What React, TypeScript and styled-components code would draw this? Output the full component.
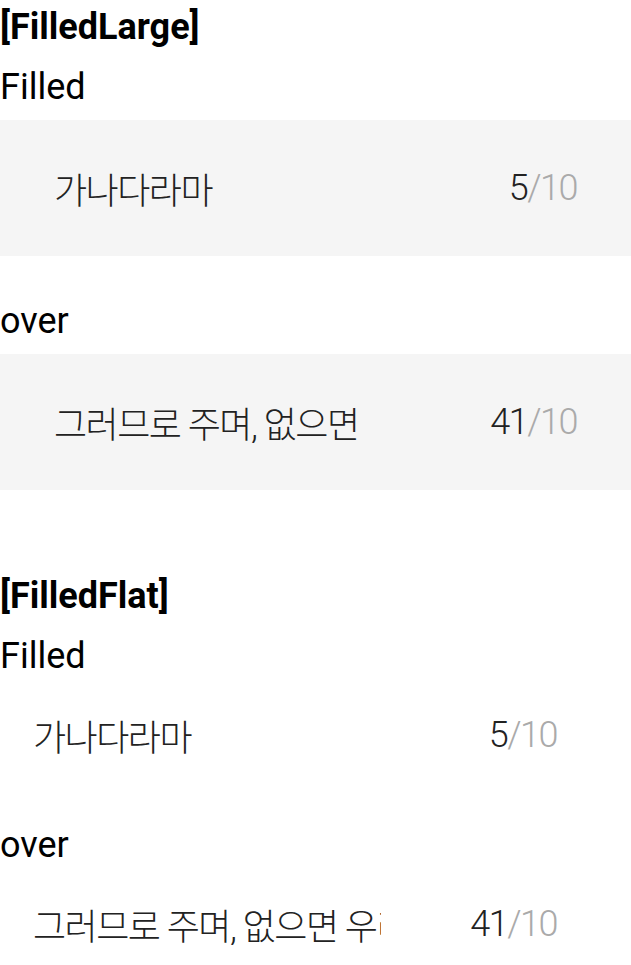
import styled, { createGlobalStyle } from 'styled-components';

const GlobalStyle = createGlobalStyle`
  html, body {
    margin: 0;
    padding: 0;
    background: #ffffff;
  }
  body {
    font-family: Roboto, "Noto Sans CJK KR", sans-serif;
    color: #000;
  }
`;

const Page = styled.div`
  display: flex;
  flex-direction: column;
  gap: 81px;
  padding-top: 2px;
  width: 631px;
`;

const Section = styled.section`
  display: flex;
  flex-direction: column;
`;

const Title = styled.h2`
  margin: 0 0 10px;
  font-size: 36px;
  font-weight: 700;
  line-height: 50px;
`;

const Group = styled.div`
  display: flex;
  flex-direction: column;
  & + & {
    margin-top: 40px;
  }
`;

const Label = styled.div`
  margin-bottom: 8px;
  font-size: 36px;
  line-height: 50px;
`;

const Row = styled.div<{ $variant: 'large' | 'flat' }>`
  display: flex;
  align-items: center;
  height: ${(p) => (p.$variant === 'large' ? '136px' : '91px')};
  padding: ${(p) => (p.$variant === 'large' ? '0 54px' : '0 74px 0 33px')};
  background: ${(p) => (p.$variant === 'large' ? '#f5f5f5' : 'transparent')};
  box-sizing: border-box;
`;

const TextInput = styled.input<{ $width: number }>`
  width: ${(p) => p.$width}px;
  padding: 0;
  border: none;
  outline: none;
  background: transparent;
  font-family: Roboto, "Noto Sans CJK KR", sans-serif;
  font-size: 36px;
  font-weight: 300;
  color: #222;
  letter-spacing: -1.5px;
`;

const Counter = styled.div`
  margin-left: auto;
  font-size: 36px;
  font-weight: 300;
  line-height: 1;
  color: #222;
  letter-spacing: -1.5px;
  white-space: nowrap;
`;

const Max = styled.span`
  color: #aaa;
`;

type FieldProps = {
  label: string;
  value: string;
  count: number;
  max: number;
  variant: 'large' | 'flat';
  inputWidth: number;
};

const Field = ({ label, value, count, max, variant, inputWidth }: FieldProps) => (
  <Group>
    <Label>{label}</Label>
    <Row $variant={variant}>
      <TextInput $width={inputWidth} value={value} readOnly />
      <Counter>
        {count}
        <Max>/{max}</Max>
      </Counter>
    </Row>
  </Group>
);

const longText = '그러므로 주며, 없으면 우리는 이상의 꽃이 피고 희망의 놀이 뜨고';

export default function App() {
  return (
    <>
      <GlobalStyle />
      <Page>
        <Section>
          <Title>[FilledLarge]</Title>
          <Field label="Filled" value="가나다라마" count={5} max={10} variant="large" inputWidth={308} />
          <Field label="over" value={longText} count={41} max={10} variant="large" inputWidth={308} />
        </Section>
        <Section>
          <Title>[FilledFlat]</Title>
          <Field label="Filled" value="가나다라마" count={5} max={10} variant="flat" inputWidth={348} />
          <Field label="over" value={longText} count={41} max={10} variant="flat" inputWidth={348} />
        </Section>
      </Page>
    </>
  );
}
